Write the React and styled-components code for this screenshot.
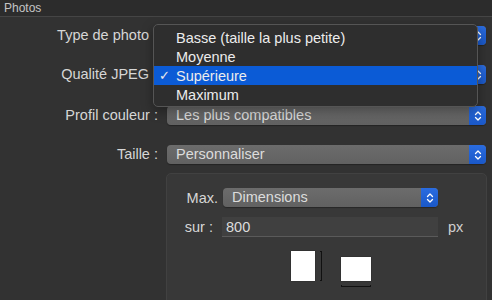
import styled, { createGlobalStyle } from 'styled-components';

const GlobalStyle = createGlobalStyle`
  html, body {
    margin: 0;
    padding: 0;
    background: #323232;
    font-family: 'Liberation Sans', Arial, sans-serif;
  }
`;

const qualities = ['Basse (taille la plus petite)', 'Moyenne', 'Supérieure', 'Maximum'];

function Stepper() {
  return (
    <StepBtn>
      <svg width="8" height="12" viewBox="0 0 8 12">
        <path d="M1.5 4.5 L4 2 L6.5 4.5 M1.5 7.5 L4 10 L6.5 7.5" fill="none" stroke="#fff" strokeWidth="1.3" strokeLinecap="round" strokeLinejoin="round" />
      </svg>
    </StepBtn>
  );
}

function Select({ value }) {
  return (
    <SelectBox>
      <SelectText>{value}</SelectText>
      <Stepper />
    </SelectBox>
  );
}

export default function App() {
  return (
    <>
      <GlobalStyle />
      <Page>
        <Header>Photos</Header>
        <Form>
          <Label $bare>Type de photo</Label>
          <Select value="" />
          <Label $bare>Qualité JPEG</Label>
          <Select value="" />
          <Label>Profil couleur :</Label>
          <Select value="Les plus compatibles" />
          <Label>Taille :</Label>
          <Select value="Personnaliser" />
          <span />
          <Group>
            <GroupGrid>
              <SmallLabel>Max.</SmallLabel>
              <SelectBox>
                <SelectText>Dimensions</SelectText>
                <Stepper />
              </SelectBox>
              <span />
              <SmallLabel $shift>sur :</SmallLabel>
              <Field>800</Field>
              <Unit>px</Unit>
            </GroupGrid>
            <Orient>
              <OrientItem>
                <Sheet $w={24} $h={30} />
                <VBracket />
              </OrientItem>
              <OrientCol>
                <Sheet $w={30} $h={24} />
                <HBracket />
              </OrientCol>
            </Orient>
          </Group>
        </Form>
        <Menu>
          {qualities.map((q) => (
            <MenuItem key={q} $active={q === 'Supérieure'}>
              <Check>{q === 'Supérieure' ? '✓' : ''}</Check>
              {q}
            </MenuItem>
          ))}
        </Menu>
      </Page>
    </>
  );
}

const Page = styled.div`
  position: relative;
  width: 492px;
  height: 300px;
  overflow: hidden;
  background: #323232;
`;

const Header = styled.div`
  height: 17px;
  box-sizing: border-box;
  padding: 1px 0 0 4px;
  font-size: 12px;
  color: #c4c4c4;
  background: #2c2c2c;
  border-bottom: 1px solid #454545;
`;

const Form = styled.div`
  display: grid;
  grid-template-columns: 158px 1fr;
  grid-template-rows: 19px 19px 21px 19px auto;
  column-gap: 9px;
  row-gap: 20px;
  align-items: end;
  padding: 9px 6px 0 0;
`;

const Label = styled.div`
  align-self: end;
  height: 19px;
  line-height: 19px;
  text-align: right;
  font-size: 14.5px;
  color: #d6d6d6;
  white-space: nowrap;
  padding-right: ${(p) => (p.$bare ? '9px' : '0')};
`;

const SelectBox = styled.div`
  display: flex;
  align-items: stretch;
  height: 19px;
  border-radius: 4px;
  background: linear-gradient(#6c6c6c, #616161);
  box-shadow: 0 1px 1px rgba(0, 0, 0, 0.3);
`;

const SelectText = styled.div`
  flex: 1;
  padding-left: 9px;
  font-size: 14.5px;
  line-height: 19px;
  color: #dcdcdc;
  white-space: nowrap;
  overflow: hidden;
`;

const StepBtn = styled.div`
  width: 17px;
  display: flex;
  align-items: center;
  justify-content: center;
  border-radius: 0 4px 4px 0;
  background: linear-gradient(#2a6ce0, #1a58c8);
`;

const Group = styled.div`
  align-self: start;
  margin-top: -11px;
  margin-right: -1px;
  margin-left: -1px;
  height: 150px;
  box-sizing: border-box;
  border: 1px solid #414141;
  border-radius: 5px;
  background: #383838;
  padding-top: 14px;
`;

const GroupGrid = styled.div`
  display: grid;
  grid-template-columns: 51px 215px 1fr;
  column-gap: 5px;
  row-gap: 10px;
  align-items: center;
`;

const SmallLabel = styled.div`
  text-align: right;
  font-size: 14.5px;
  color: #d6d6d6;
  white-space: nowrap;
  padding-right: ${(p) => (p.$shift ? '5px' : '0')};
`;

const Field = styled.div`
  height: 20px;
  box-sizing: border-box;
  margin-left: -1px;
  padding-left: 4px;
  font-size: 14.5px;
  line-height: 20px;
  color: #dcdcdc;
  background: #404040;
  border-bottom: 1px solid #5a5a5a;
`;

const Unit = styled.div`
  padding-left: 5px;
  font-size: 14.5px;
  color: #d0d0d0;
`;

const Orient = styled.div`
  display: flex;
  align-items: flex-start;
  gap: 19px;
  padding: 14px 0 0 124px;
`;

const OrientItem = styled.div`
  display: flex;
  gap: 5px;
`;

const OrientCol = styled.div`
  display: flex;
  flex-direction: column;
  gap: 4px;
  padding-top: 6px;
`;

const Sheet = styled.div`
  width: ${(p) => p.$w}px;
  height: ${(p) => p.$h}px;
  background: #fff;
  box-shadow: 0 0 1px rgba(0, 0, 0, 0.6);
`;

const VBracket = styled.div`
  width: 2px;
  height: 30px;
  box-sizing: border-box;
  border: 1px solid #111;
  border-left: none;
`;

const HBracket = styled.div`
  width: 30px;
  height: 2px;
  box-sizing: border-box;
  border: 1px solid #111;
  border-top: none;
`;

const Menu = styled.div`
  position: absolute;
  left: 153px;
  top: 24px;
  width: 325px;
  height: 83px;
  box-sizing: border-box;
  padding-top: 3px;
  background: #2e2e2e;
  border: 1px solid #555;
  border-radius: 5px;
  box-shadow: 0 4px 12px rgba(0, 0, 0, 0.35);
`;

const MenuItem = styled.div`
  display: flex;
  align-items: center;
  height: 19px;
  font-size: 14.5px;
  color: #ececec;
  background: ${(p) => (p.$active ? '#0b5bd6' : 'transparent')};
`;

const Check = styled.span`
  width: 22px;
  padding-left: 5px;
  box-sizing: border-box;
  font-family: 'DejaVu Sans', sans-serif;
  font-size: 13px;
`;
